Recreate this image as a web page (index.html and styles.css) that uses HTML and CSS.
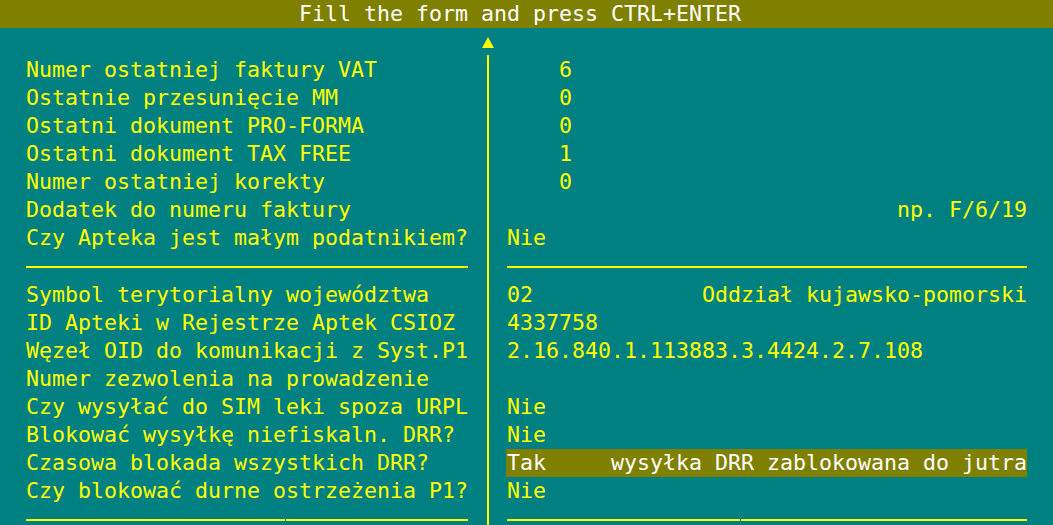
FILE: index.html
```html
<!DOCTYPE html>
<html lang="pl">
<head>
<meta charset="utf-8">
<link rel="stylesheet" href="styles.css">
</head>
<body>
<div class="screen">
  <div class="titlebar">Fill the form and press CTRL+ENTER</div>
  <div class="form">
    <div class="left">
      <div class="row">Numer ostatniej faktury VAT</div>
      <div class="row">Ostatnie przesunięcie MM</div>
      <div class="row">Ostatni dokument PRO-FORMA</div>
      <div class="row">Ostatni dokument TAX FREE</div>
      <div class="row">Numer ostatniej korekty</div>
      <div class="row">Dodatek do numeru faktury</div>
      <div class="row">Czy Apteka jest małym podatnikiem?</div>
      <div class="row sep"><span class="bar"></span></div>
      <div class="row">Symbol terytorialny województwa</div>
      <div class="row">ID Apteki w Rejestrze Aptek CSIOZ</div>
      <div class="row">Węzeł OID do komunikacji z Syst.P1</div>
      <div class="row">Numer zezwolenia na prowadzenie</div>
      <div class="row">Czy wysyłać do SIM leki spoza URPL</div>
      <div class="row">Blokować wysyłkę niefiskaln. DRR?</div>
      <div class="row">Czasowa blokada wszystkich DRR?</div>
      <div class="row">Czy blokować durne ostrzeżenia P1?</div>
      <div class="row sep"><span class="bar w20"></span><span class="bar"></span></div>
    </div>
    <div class="divider">
      <div class="arrow-cell"><span class="arrow"></span></div>
      <div class="vline"></div>
    </div>
    <div class="right">
      <div class="row num">6</div>
      <div class="row num">0</div>
      <div class="row num">0</div>
      <div class="row num">1</div>
      <div class="row num">0</div>
      <div class="row end">np. F/6/19</div>
      <div class="row">Nie</div>
      <div class="row sep"><span class="bar"></span></div>
      <div class="row split"><span>02</span><span>Oddział kujawsko-pomorski</span></div>
      <div class="row">4337758</div>
      <div class="row">2.16.840.1.113883.3.4424.2.7.108</div>
      <div class="row"></div>
      <div class="row">Nie</div>
      <div class="row">Nie</div>
      <div class="row split active"><span>Tak</span><span>wysyłka DRR zablokowana do jutra</span></div>
      <div class="row">Nie</div>
      <div class="row sep"><span class="bar w18"></span><span class="bar"></span></div>
    </div>
  </div>
</div>
</body>
</html>
```

FILE: styles.css
```css
html, body {
  margin: 0;
  padding: 0;
  background: #008080;
}
.screen {
  width: 1053px;
  height: 525px;
  overflow: hidden;
  background: #008080;
  color: #ffff00;
  font-family: "DejaVu Sans Mono", "Liberation Mono", monospace;
  font-size: 21.6px;
  line-height: 28px;
}
.titlebar {
  height: 28px;
  background: #808000;
  color: #ffffff;
  padding-left: 23ch;
  white-space: pre;
}
.form {
  display: flex;
  height: 497px;
}
.left {
  width: 34ch;
  padding-left: 2ch;
  padding-top: 28px;
}
.divider {
  width: 3ch;
  display: flex;
  flex-direction: column;
  align-items: center;
}
.arrow-cell {
  height: 27px;
  display: flex;
  justify-content: center;
  padding-left: 1px;
}
.arrow {
  margin-top: 9px;
  width: 0;
  height: 0;
  border-left: 6px solid transparent;
  border-right: 6px solid transparent;
  border-bottom: 11px solid #ffff00;
}
.vline {
  flex: 1;
  width: 2px;
  margin-left: 1px;
  background: #ffff00;
}
.right {
  width: 40ch;
  padding-top: 28px;
}
.row {
  height: 28px;
  white-space: pre;
}
.num {
  padding-left: 4ch;
}
.end {
  text-align: right;
}
.split {
  display: flex;
  justify-content: space-between;
}
.active {
  background: #808000;
  color: #ffffff;
  margin-left: -1px;
  padding-left: 1px;
}
.sep {
  display: flex;
  align-items: center;
  gap: 1px;
  padding-top: 1px;
}
.bar {
  flex: 1;
  height: 2px;
  background: #ffff00;
}
.bar.w20 {
  flex: none;
  width: calc(20ch - 1px);
}
.bar.w18 {
  flex: none;
  width: calc(18ch - 1px);
}
```
